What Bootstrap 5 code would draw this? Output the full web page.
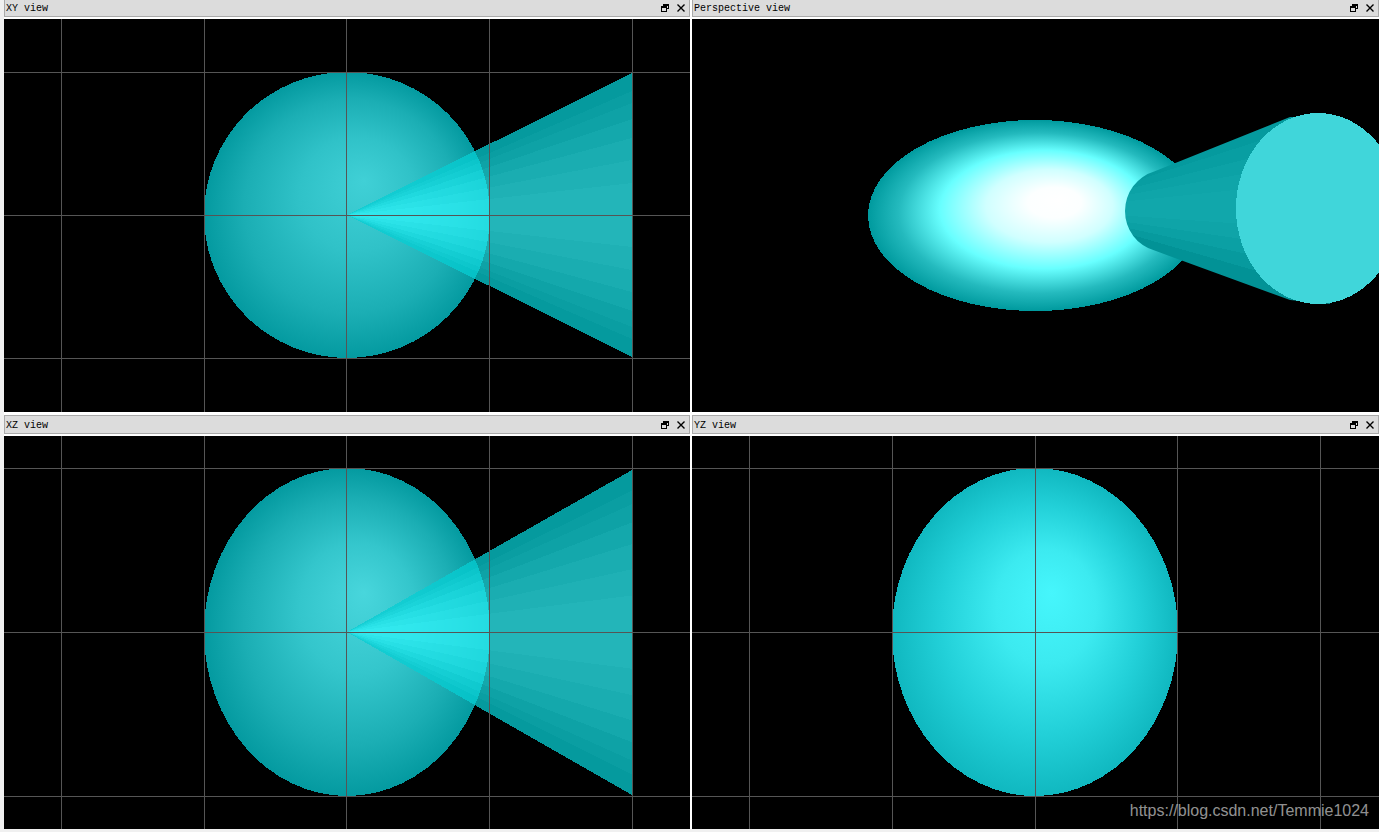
<!DOCTYPE html>
<html lang="en">
<head>
  <meta charset="UTF-8">
  <title>Viewports</title>
  <link href="https://cdn.jsdelivr.net/npm/bootstrap@5.3.0/dist/css/bootstrap.min.css" rel="stylesheet">
  <style>
    html, body { height: 832px; overflow: hidden; background: #f0f0f0; }
    .quad-wrap { padding-left: 4px; }
    .quad-grid {
      grid-template-columns: 686px 687px;
      grid-template-rows: 414px 414px;
      column-gap: 2px;
      row-gap: 3px;
      margin-top: -2px;
      background: #fff;
    }
    .view-bar {
      height: 19px;
      margin-bottom: 2px;
      padding: 0 4px 0 1px;
      background: #dcdcdc;
      border: 1px solid #aaa;
      font: 10px/1 "Liberation Mono", monospace;
      color: #000;
    }
    .view-title { padding-top: 2px; }
    .view-btns { gap: 8px; }
    .view-canvas { display: block; width: 100%; height: 393px; background: #000; shape-rendering: crispEdges; }
    .watermark {
      right: 10px;
      bottom: 9px;
      font: 16px/1.2 "Liberation Sans", sans-serif;
      color: rgba(255, 255, 255, .58);
    }
  </style>
</head>
<body>
  <div class="quad-wrap position-relative">
    <div class="quad-grid d-grid">
      <section>
        <div class="view-bar d-flex align-items-center justify-content-between">
          <span class="view-title">XY view</span>
          <span class="view-btns d-flex align-items-center">
            <svg width="8" height="8" viewBox="0 0 8 8"><path d="M2.5 2V.5h5v4H6M2.5 1.5h5M.5 2.5h5v5h-5zM.5 3.5h5" fill="none" stroke="#000" shape-rendering="crispEdges"/></svg>
            <svg width="8" height="8" viewBox="0 0 8 8"><path d="M.5 .5l7 7M7.5 .5l-7 7" stroke="#000" stroke-width="1.4"/></svg>
          </span>
        </div>
        <svg class="view-canvas" id="viewXY" viewBox="4 19 686 393"></svg>
      </section>
      <section>
        <div class="view-bar d-flex align-items-center justify-content-between">
          <span class="view-title">Perspective view</span>
          <span class="view-btns d-flex align-items-center">
            <svg width="8" height="8" viewBox="0 0 8 8"><path d="M2.5 2V.5h5v4H6M2.5 1.5h5M.5 2.5h5v5h-5zM.5 3.5h5" fill="none" stroke="#000" shape-rendering="crispEdges"/></svg>
            <svg width="8" height="8" viewBox="0 0 8 8"><path d="M.5 .5l7 7M7.5 .5l-7 7" stroke="#000" stroke-width="1.4"/></svg>
          </span>
        </div>
        <svg class="view-canvas" id="viewPersp" viewBox="692 19 687 393"></svg>
      </section>
      <section>
        <div class="view-bar d-flex align-items-center justify-content-between">
          <span class="view-title">XZ view</span>
          <span class="view-btns d-flex align-items-center">
            <svg width="8" height="8" viewBox="0 0 8 8"><path d="M2.5 2V.5h5v4H6M2.5 1.5h5M.5 2.5h5v5h-5zM.5 3.5h5" fill="none" stroke="#000" shape-rendering="crispEdges"/></svg>
            <svg width="8" height="8" viewBox="0 0 8 8"><path d="M.5 .5l7 7M7.5 .5l-7 7" stroke="#000" stroke-width="1.4"/></svg>
          </span>
        </div>
        <svg class="view-canvas" id="viewXZ" viewBox="4 436 686 393"></svg>
      </section>
      <section>
        <div class="view-bar d-flex align-items-center justify-content-between">
          <span class="view-title">YZ view</span>
          <span class="view-btns d-flex align-items-center">
            <svg width="8" height="8" viewBox="0 0 8 8"><path d="M2.5 2V.5h5v4H6M2.5 1.5h5M.5 2.5h5v5h-5zM.5 3.5h5" fill="none" stroke="#000" shape-rendering="crispEdges"/></svg>
            <svg width="8" height="8" viewBox="0 0 8 8"><path d="M.5 .5l7 7M7.5 .5l-7 7" stroke="#000" stroke-width="1.4"/></svg>
          </span>
        </div>
        <svg class="view-canvas" id="viewYZ" viewBox="692 436 687 393"></svg>
      </section>
    </div>
    <div class="watermark position-absolute">https://blog.csdn.net/Temmie1024</div>
  </div>

  <script>
    // band colours from the axis outwards, as seen on black
    const bandColors = [[0x23,0xb5,0xb9],[0x1f,0xb1,0xb5],[0x1a,0xad,0xb1],[0x14,0xa8,0xac],[0x0e,0xa2,0xa6],[0x0a,0x9e,0xa2],[0x05,0x9a,0x9e]];
    const bandEdges = [0, 32, 55, 77, 96, 112, 124];
    const alpha = 0.75;

    function gridLines(xs, ys, x0, y0, w, h) {
      let out = '';
      xs.forEach(x => out += `<rect x="${x}" y="${y0}" width="1" height="${h}" fill="#555"/>`);
      ys.forEach(y => out += `<rect x="${x0}" y="${y}" width="${w}" height="1" fill="#555"/>`);
      return out;
    }

    // lit ball: the highlight sits off centre, the rim is the same colour all round
    function radial(id, fx, fy, stops) {
      const s = stops.map(p => `<stop offset="${p[0]}" stop-color="${p[1]}"/>`).join('');
      return `<radialGradient id="${id}" cx="0.5" cy="0.5" r="0.5" fx="${fx}" fy="${fy}">${s}</radialGradient>`;
    }

    // flat cone as a fan of see-through triangles
    function coneFan(ax, ay, ex, up, down) {
      let out = '';
      const mirror = [[up, -1], [down, 1]];
      mirror.forEach(([half, sign]) => {
        for (let i = 0; i < bandColors.length; i++) {
          const k = half / 142;
          const a = bandEdges[i] * k * sign;
          const b = (i === bandColors.length - 1 ? half : bandEdges[i + 1] * k) * sign;
          const c = bandColors[i].map(v => Math.min(255, Math.round(v / alpha)));
          out += `<polygon points="${ax},${ay} ${ex},${ay + a} ${ex},${ay + b}" fill="rgb(${c})" fill-opacity="${alpha}"/>`;
        }
      });
      return out;
    }

    function flatView(id, cy, ry, up, down, ys, stops) {
      document.getElementById(id).innerHTML =
        `<defs>${radial(id + 'G', 0.56, 0.38, stops)}</defs>` +
        `<ellipse cx="347" cy="${cy}" rx="143" ry="${ry}" fill="url(#${id}G)"/>` +
        coneFan(347, cy, 632, up, down) +
        gridLines([61, 204, 346, 489, 632], ys, 4, cy - 220, 686, 440);
    }

    flatView('viewXY', 215, 143, 142, 142, [72, 215, 358],
      [[0, '#40d0d6'], [0.4, '#30c2c8'], [0.75, '#1baeb4'], [1, '#049aa0']]);
    flatView('viewXZ', 632, 164, 162, 163, [468, 632, 796],
      [[0, '#48d6dc'], [0.4, '#34c6cc'], [0.75, '#1baeb4'], [1, '#049aa0']]);

    document.getElementById('viewYZ').innerHTML =
      `<defs>${radial('yzG', 0.56, 0.38, [[0, '#46f6fc'], [0.35, '#3ceaf0'], [0.7, '#22d0d8'], [1, '#10b8c0']])}</defs>` +
      `<ellipse cx="1035" cy="632" rx="143" ry="164" fill="url(#yzG)"/>` +
      gridLines([749, 892, 1035, 1177, 1320], [468, 632, 796], 692, 436, 687, 393);

    // perspective: opaque cone in front of the lit sphere
    const perspBands = [[-125, -92, '#059a9e'], [-92, -72, '#089ea2'], [-72, -52, '#0ca2a6'], [-52, -30, '#0fa5a9'], [-30, 20, '#11a7ab'], [20, 42, '#0fa4a8'], [42, 62, '#0ba0a4'], [62, 82, '#079a9e'], [82, 130, '#029296']];
    let fan = '';
    perspBands.forEach(b => {
      fan += `<polygon points="1045,210 1330,${210 + b[0]} 1330,${210 + b[1]}" fill="${b[2]}"/>`;
    });
    document.getElementById('viewPersp').innerHTML =
      `<defs>${radial('pG', 0.57, 0.42, [[0, '#fff'], [0.16, '#fcffff'], [0.38, '#d0ffff'], [0.62, '#68ffff'], [0.84, '#24babe'], [1, '#009a9e']])}` +
      `<clipPath id="coneClip"><ellipse cx="1165" cy="211" rx="40" ry="41"/><polygon points="1153,172 1290,117 1330,117 1330,304 1290,300 1153,250"/></clipPath></defs>` +
      `<ellipse cx="1035" cy="215.5" rx="167" ry="95.5" fill="url(#pG)"/>` +
      `<g clip-path="url(#coneClip)">${fan}</g>` +
      `<ellipse cx="1318" cy="208.5" rx="82" ry="95.5" fill="#40d6da"/>`;
  </script>
  <script src="https://cdn.jsdelivr.net/npm/bootstrap@5.3.0/dist/js/bootstrap.bundle.min.js"></script>
</body>
</html>
